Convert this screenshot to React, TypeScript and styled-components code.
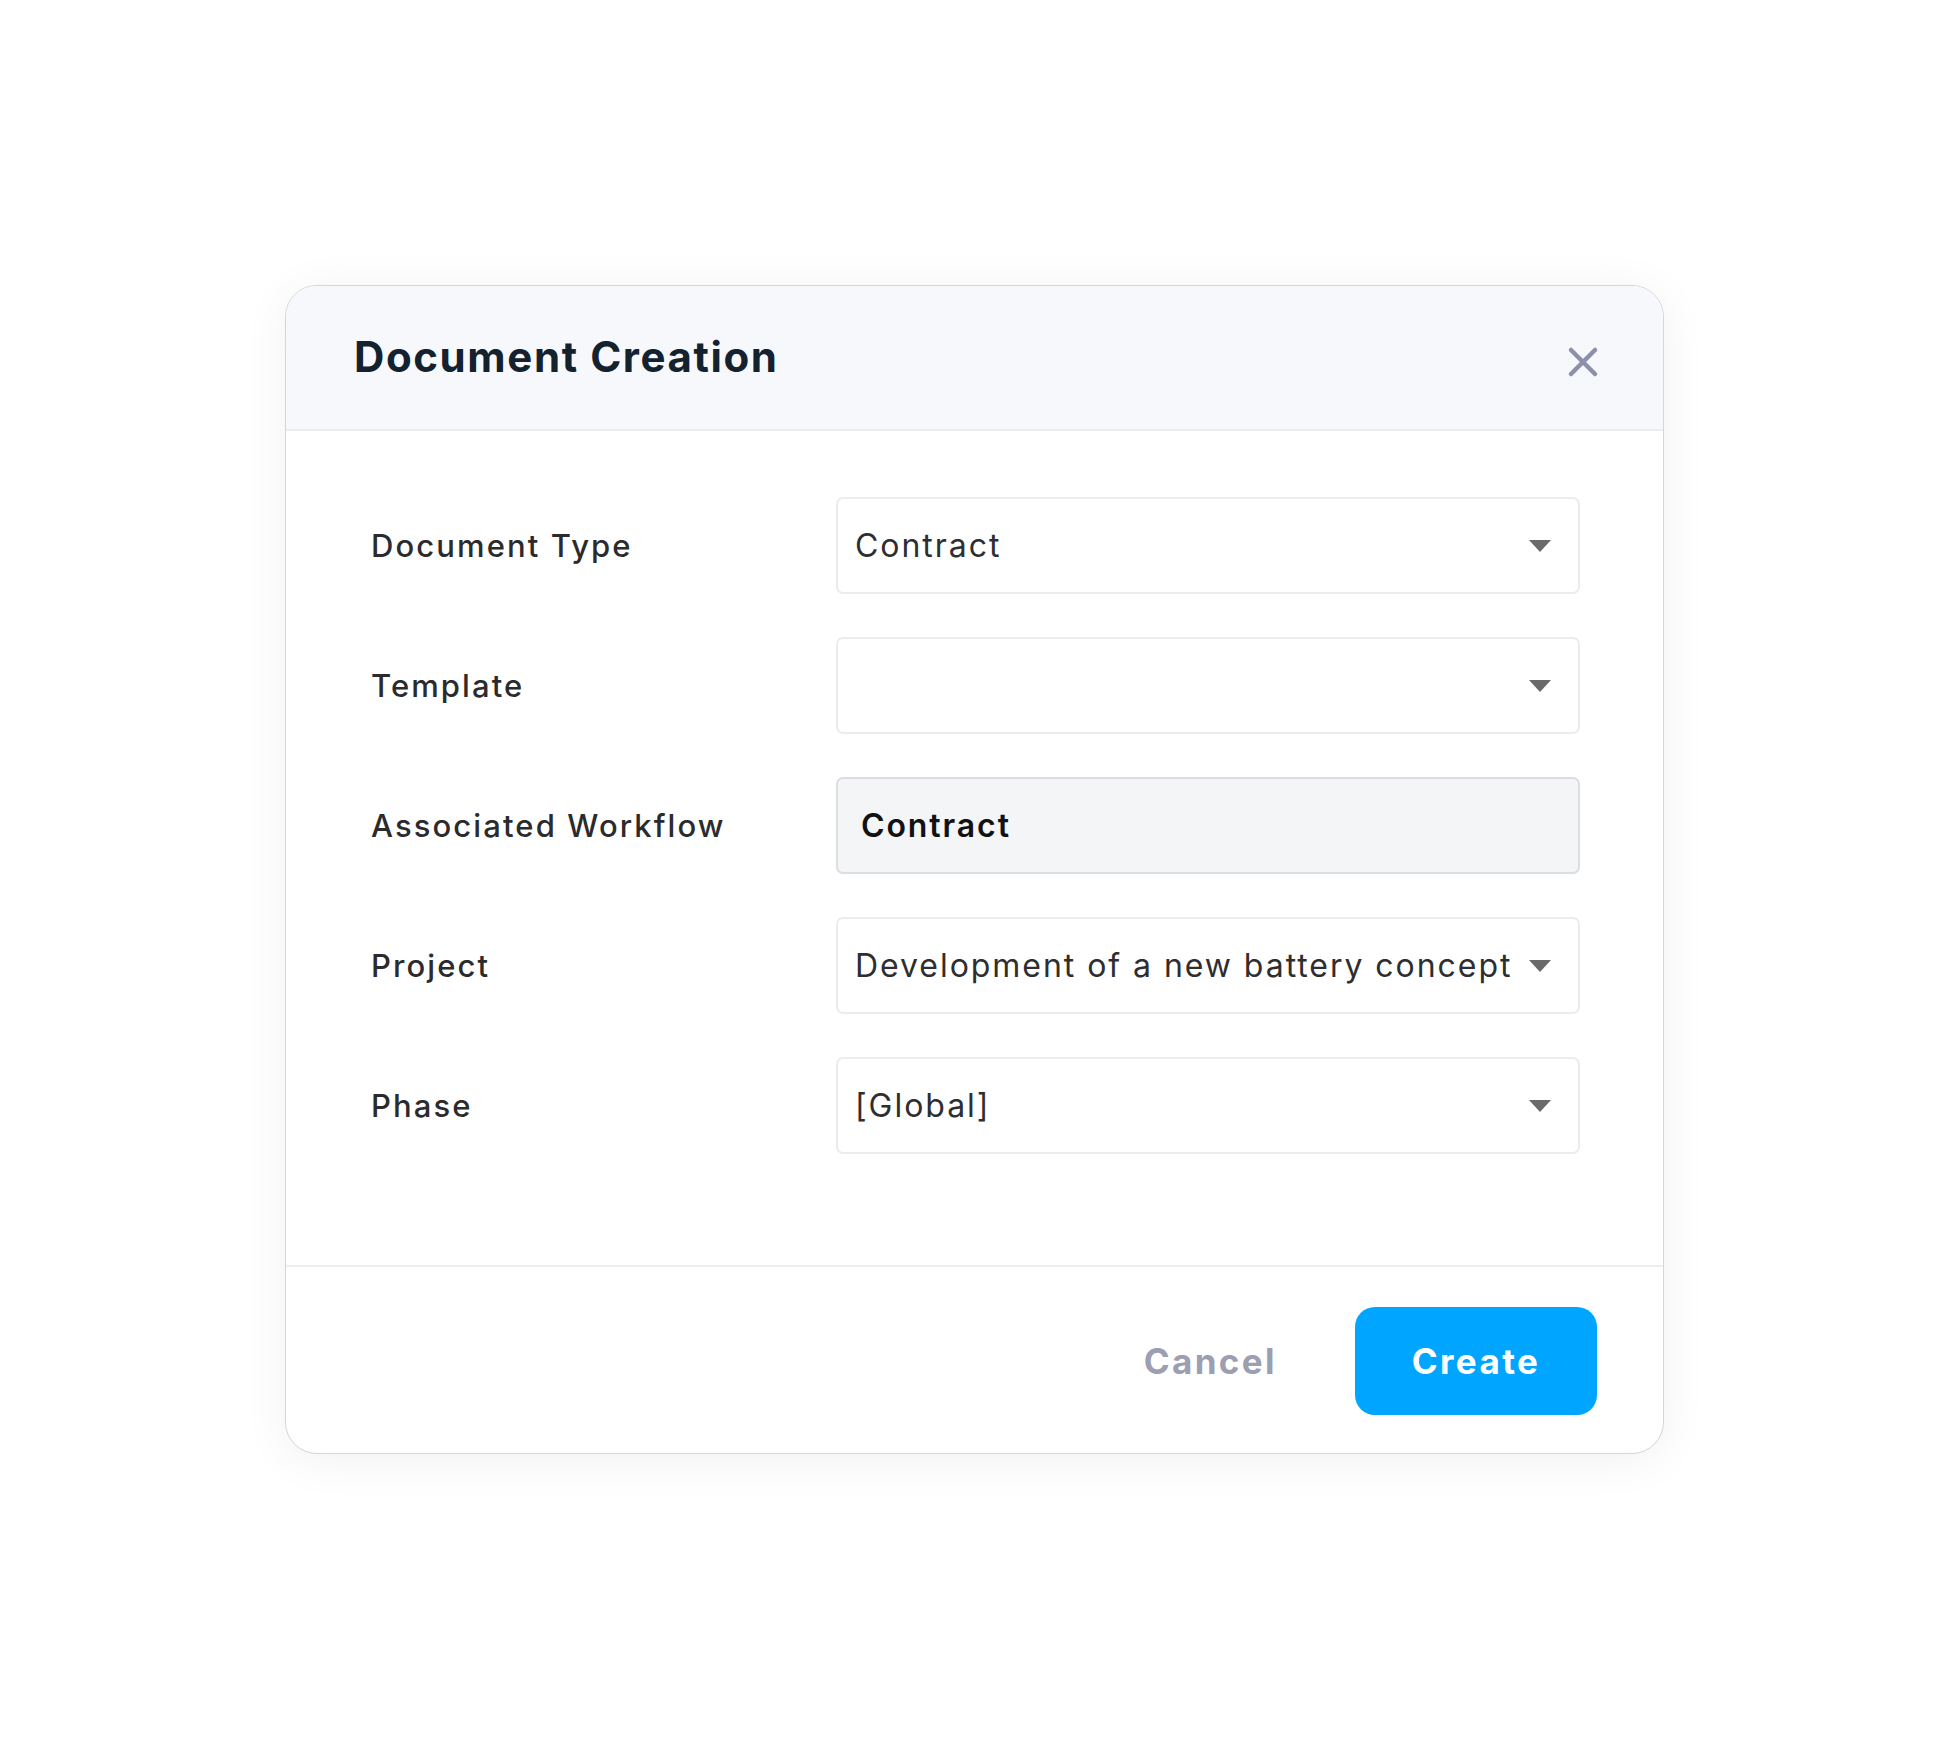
import React from "react";
import styled, { createGlobalStyle } from "styled-components";

const GlobalStyle = createGlobalStyle`
  html, body {
    margin: 0;
    padding: 0;
    background: #ffffff;
  }
  body {
    font-family: Inter, "Open Sans", "Noto Sans", sans-serif;
    -webkit-font-smoothing: antialiased;
  }
  * { box-sizing: border-box; }
`;

const Page = styled.div`
  width: 1950px;
  min-height: 1740px;
  padding: 285px 0 0 285px;
  display: flex;
  align-items: flex-start;
`;

const Dialog = styled.section`
  width: 1379px;
  background: #ffffff;
  border: 1px solid #d4d5df;
  border-radius: 32px;
  overflow: hidden;
  box-shadow: 0 6px 48px rgba(20, 24, 60, 0.06);
  display: flex;
  flex-direction: column;
`;

const Header = styled.header`
  height: 145px;
  background: #f7f8fb;
  border-bottom: 2px solid #eaecf1;
  padding: 0 62px 0 68px;
  display: flex;
  align-items: center;
  justify-content: space-between;
`;

const Title = styled.h1`
  margin: 0;
  margin-top: -3px;
  font-size: 42px;
  font-weight: 700;
  letter-spacing: 1.6px;
  color: #14212e;
`;

const CloseButton = styled.button`
  width: 36px;
  height: 36px;
  margin-top: 8px;
  padding: 0;
  border: none;
  background: transparent;
  display: flex;
  align-items: center;
  justify-content: center;
  cursor: pointer;
  color: #8d8fab;
`;

const Body = styled.div`
  padding: 66px 85px 111px 85px;
  display: grid;
  grid-template-columns: 465px 744px;
  grid-auto-rows: 97px;
  row-gap: 43px;
`;

const Label = styled.label`
  display: flex;
  align-items: center;
  font-size: 31px;
  font-weight: 500;
  letter-spacing: 2.1px;
  color: #2b2b2d;
`;

const Field = styled.div<{ $readOnly?: boolean }>`
  display: flex;
  align-items: center;
  justify-content: space-between;
  padding: 0 27px 0 ${(p) => (p.$readOnly ? "23px" : "17px")};
  border-radius: 7px;
  border: 2px solid ${(p) => (p.$readOnly ? "#dcdde4" : "#ececee")};
  background: ${(p) => (p.$readOnly ? "#f4f5f7" : "#ffffff")};
`;

const Value = styled.span<{ $bold?: boolean }>`
  font-size: 32px;
  font-weight: ${(p) => (p.$bold ? 600 : 400)};
  letter-spacing: ${(p) => (p.$bold ? "1.9px" : "1.95px")};
  color: ${(p) => (p.$bold ? "#121212" : "#2e2e30")};
  white-space: nowrap;
`;

const Caret = styled.svg`
  flex: none;
  width: 22px;
  height: 12px;
  color: #6a6a6a;
`;

const Footer = styled.footer`
  border-top: 2px solid #eceef2;
  padding: 40px 66px 38px;
  display: flex;
  justify-content: flex-end;
  align-items: center;
  gap: 78px;
`;

const TextButton = styled.button`
  border: none;
  background: transparent;
  padding: 0;
  font-family: inherit;
  font-size: 35px;
  font-weight: 700;
  letter-spacing: 2.4px;
  color: #9c9eb2;
  cursor: pointer;
`;

const PrimaryButton = styled.button`
  width: 242px;
  height: 108px;
  border: none;
  border-radius: 20px;
  background: #00a5ff;
  color: #ffffff;
  font-family: inherit;
  font-size: 35px;
  font-weight: 700;
  letter-spacing: 2.4px;
  cursor: pointer;
`;

const DropdownCaret = () => (
  <Caret viewBox="0 0 22 12" aria-hidden="true">
    <path d="M0 0 H22 L11 12 Z" fill="currentColor" />
  </Caret>
);

type Row = { label: string; value: string; kind: "select" | "readonly" };

const rows: Row[] = [
  { label: "Document Type", value: "Contract", kind: "select" },
  { label: "Template", value: "", kind: "select" },
  { label: "Associated Workflow", value: "Contract", kind: "readonly" },
  { label: "Project", value: "Development of a new battery concept", kind: "select" },
  { label: "Phase", value: "[Global]", kind: "select" },
];

export default function App() {
  return (
    <>
      <GlobalStyle />
      <Page>
        <Dialog role="dialog" aria-label="Document Creation">
          <Header>
            <Title>Document Creation</Title>
            <CloseButton aria-label="Close">
              <svg width="32" height="32" viewBox="0 0 32 32" fill="none">
                <path
                  d="M4 4 L28 28 M28 4 L4 28"
                  stroke="currentColor"
                  strokeWidth="4.5"
                  strokeLinecap="round"
                />
              </svg>
            </CloseButton>
          </Header>
          <Body>
            {rows.map((r) => (
              <React.Fragment key={r.label}>
                <Label>{r.label}</Label>
                {r.kind === "readonly" ? (
                  <Field $readOnly>
                    <Value $bold>{r.value}</Value>
                  </Field>
                ) : (
                  <Field>
                    <Value>{r.value}</Value>
                    <DropdownCaret />
                  </Field>
                )}
              </React.Fragment>
            ))}
          </Body>
          <Footer>
            <TextButton>Cancel</TextButton>
            <PrimaryButton>Create</PrimaryButton>
          </Footer>
        </Dialog>
      </Page>
    </>
  );
}
